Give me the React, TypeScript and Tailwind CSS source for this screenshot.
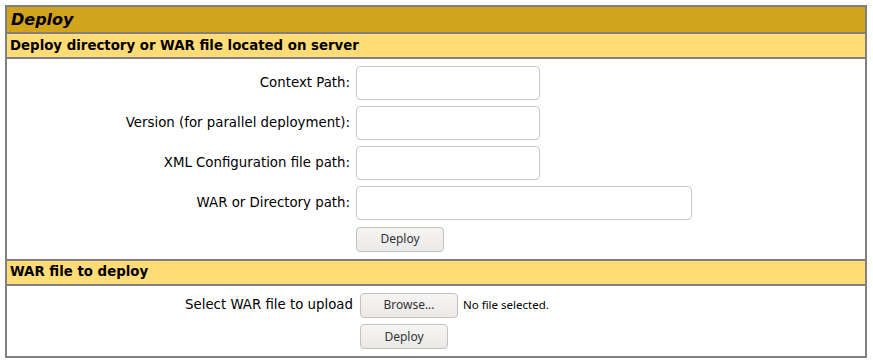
import React from "react";

const labelFont = { fontFamily: '"DejaVu Sans", sans-serif' };

function Btn({ children, w }: { children: React.ReactNode; w: string }) {
  return (
    <button
      className={`${w} h-[25px] rounded-[4px] border border-[#c4c0bc] bg-gradient-to-b from-[#f6f5f4] to-[#ebe9e7] text-[12px] text-[#2e3436] font-['Noto_Sans',sans-serif] leading-none`}
    >
      {children}
    </button>
  );
}

function Field({ label, w }: { label: string; w: string }) {
  return (
    <div className="flex items-center gap-[6px]">
      <div className="w-[343px] text-right text-[13.33px] text-black">{label}</div>
      <div className={`${w} h-[34px] rounded-[4px] border border-[#cdc7c2] bg-white`} />
    </div>
  );
}

export default function App() {
  return (
    <div className="bg-white w-[873px] h-[363px] pt-[5px] pl-[5px]" style={labelFont}>
      <div className="w-[862px] border border-[#808080]">
        <div className="border border-[#808080] bg-[#D2A41C] h-[27px] pl-[4px] flex items-center">
          <span className="text-[16px] font-bold italic text-black">Deploy</span>
        </div>
        <div className="border border-[#808080] bg-[#FFDC75] h-[25px] pl-[3px] flex items-center">
          <span className="text-[13.33px] font-bold text-black">Deploy directory or WAR file located on server</span>
        </div>
        <div className="border border-[#808080] bg-white pt-[7px] pb-[7px] flex flex-col gap-[6px]">
          <Field label="Context Path:" w="w-[184px]" />
          <Field label="Version (for parallel deployment):" w="w-[184px]" />
          <Field label="XML Configuration file path:" w="w-[184px]" />
          <Field label="WAR or Directory path:" w="w-[336px]" />
          <div className="pl-[349px]">
            <Btn w="w-[88px]">Deploy</Btn>
          </div>
        </div>
        <div className="border border-[#808080] bg-[#FFDC75] h-[25px] pl-[3px] flex items-center">
          <span className="text-[13.33px] font-bold text-black">WAR file to deploy</span>
        </div>
        <div className="border border-[#808080] bg-white pt-[7px] pb-[7px] flex flex-col gap-[6px]">
          <div className="flex items-center">
            <div className="w-[346px] text-right text-[13.33px] text-black">Select WAR file to upload</div>
            <div className="ml-[7px] flex items-center gap-[5px]">
              <Btn w="w-[98px]">Browse...</Btn>
              <span className="text-[11.5px] text-black font-['Noto_Sans',sans-serif]">No file selected.</span>
            </div>
          </div>
          <div className="pl-[353px]">
            <Btn w="w-[88px]">Deploy</Btn>
          </div>
        </div>
      </div>
    </div>
  );
}
